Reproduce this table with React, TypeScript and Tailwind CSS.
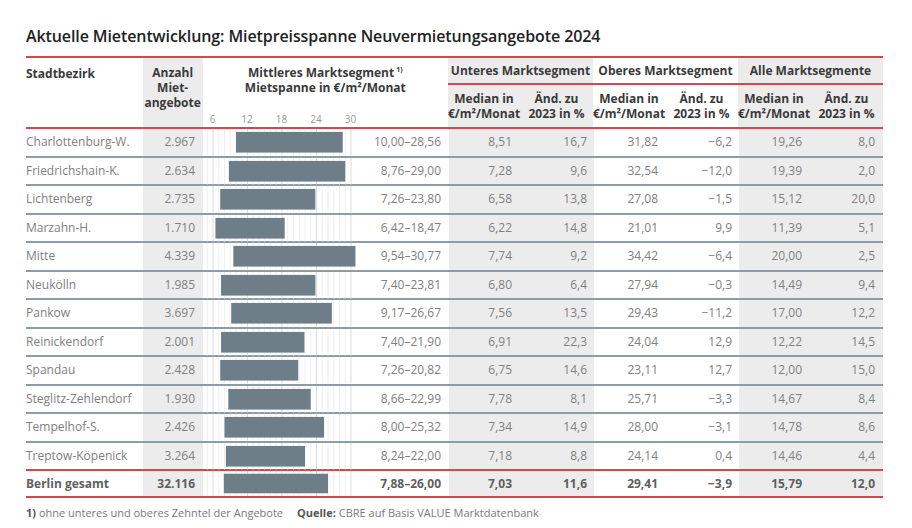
import React from "react";

type Row = {
  name: string;
  n: string;
  lo: number;
  hi: number;
  range: string;
  v: string[];
};

const rows: Row[] = [
  { name: "Charlottenburg-W.", n: "2.967", lo: 10.0, hi: 28.56, range: "10,00–28,56", v: ["8,51", "16,7", "31,82", "−6,2", "19,26", "8,0"] },
  { name: "Friedrichshain-K.", n: "2.634", lo: 8.76, hi: 29.0, range: "8,76–29,00", v: ["7,28", "9,6", "32,54", "−12,0", "19,39", "2,0"] },
  { name: "Lichtenberg", n: "2.735", lo: 7.26, hi: 23.8, range: "7,26–23,80", v: ["6,58", "13,8", "27,08", "−1,5", "15,12", "20,0"] },
  { name: "Marzahn-H.", n: "1.710", lo: 6.42, hi: 18.47, range: "6,42–18,47", v: ["6,22", "14,8", "21,01", "9,9", "11,39", "5,1"] },
  { name: "Mitte", n: "4.339", lo: 9.54, hi: 30.77, range: "9,54–30,77", v: ["7,74", "9,2", "34,42", "−6,4", "20,00", "2,5"] },
  { name: "Neukölln", n: "1.985", lo: 7.4, hi: 23.81, range: "7,40–23,81", v: ["6,80", "6,4", "27,94", "−0,3", "14,49", "9,4"] },
  { name: "Pankow", n: "3.697", lo: 9.17, hi: 26.67, range: "9,17–26,67", v: ["7,56", "13,5", "29,43", "−11,2", "17,00", "12,2"] },
  { name: "Reinickendorf", n: "2.001", lo: 7.4, hi: 21.9, range: "7,40–21,90", v: ["6,91", "22,3", "24,04", "12,9", "12,22", "14,5"] },
  { name: "Spandau", n: "2.428", lo: 7.26, hi: 20.82, range: "7,26–20,82", v: ["6,75", "14,6", "23,11", "12,7", "12,00", "15,0"] },
  { name: "Steglitz-Zehlendorf", n: "1.930", lo: 8.66, hi: 22.99, range: "8,66–22,99", v: ["7,78", "8,1", "25,71", "−3,3", "14,67", "8,4"] },
  { name: "Tempelhof-S.", n: "2.426", lo: 8.0, hi: 25.32, range: "8,00–25,32", v: ["7,34", "14,9", "28,00", "−3,1", "14,78", "8,6"] },
  { name: "Treptow-Köpenick", n: "3.264", lo: 8.24, hi: 22.0, range: "8,24–22,00", v: ["7,18", "8,8", "24,14", "0,4", "14,46", "4,4"] },
];

const total: Row = { name: "Berlin gesamt", n: "32.116", lo: 7.88, hi: 26.0, range: "7,88–26,00", v: ["7,03", "11,6", "29,41", "−3,9", "15,79", "12,0"] };

const X = (v: number) => 10 + (v - 6) * 5.75;

function Bar({ lo, hi }: { lo: number; hi: number }) {
  const lines: number[] = [];
  for (let i = 5; i <= 30; i++) lines.push(i);
  return (
    <svg width="152" height="100%" className="absolute left-0 top-0 h-full overflow-visible">
      {lines.map((i) => (
        <line
          key={i}
          x1={X(i)}
          x2={X(i)}
          y1="0"
          y2="100%"
          stroke={i % 6 === 0 ? "#dcdcdc" : "#efefef"}
          strokeWidth="1"
        />
      ))}
      <rect x={X(lo)} y="11%" width={X(hi) - X(lo)} height="78%" fill="#6e7e88" />
    </svg>
  );
}

function DataRow({ r, bold, last }: { r: Row; bold?: boolean; last?: boolean }) {
  const txt = bold ? "font-bold text-[#5f5f5f]" : "text-[#808080]";
  return (
    <div className={`flex min-h-0 ${bold ? "h-[25px]" : "flex-1"} ${last || bold ? "" : "border-b-2 border-[#8e9ca6]"} text-[12px] ${txt}`}>
      <div className="w-[117px] flex items-center">{r.name}</div>
      <div className="w-[60px] bg-[#ececec] flex items-center justify-end pr-[8px]">{r.n}</div>
      <div className="w-[152px] relative">
        <Bar lo={r.lo} hi={r.hi} />
      </div>
      <div className="w-[94px] flex items-center justify-end pr-[8px]">{r.range}</div>
      <div className="w-[72px] bg-[#ececec] flex items-center justify-end pr-[9px]">{r.v[0]}</div>
      <div className="w-[73px] bg-[#ececec] flex items-center justify-end pr-[7px]">{r.v[1]}</div>
      <div className="w-[72px] flex items-center justify-end pr-[8px]">{r.v[2]}</div>
      <div className="w-[73px] flex items-center justify-end pr-[7px]">{r.v[3]}</div>
      <div className="w-[72px] bg-[#ececec] flex items-center justify-end pr-[9px]">{r.v[4]}</div>
      <div className="w-[72px] bg-[#ececec] flex items-center justify-end pr-[8px]">{r.v[5]}</div>
    </div>
  );
}

function Group({ title, grey }: { title: string; grey?: boolean }) {
  const bg = grey ? "bg-[#ececec]" : "bg-white";
  return (
    <div className="w-[145px] flex flex-col">
      <div className={`h-[25px] ${bg} flex items-center justify-center`}>{title}</div>
      <div className="h-[2px] bg-[#d8454e]" />
      <div className={`flex-1 ${bg} flex`}>
        <div className="w-[72px] flex flex-col items-center justify-center leading-[15px]">
          <span>Median in</span>
          <span>€/m²/Monat</span>
        </div>
        <div className="w-[73px] flex flex-col items-center justify-center leading-[15px]">
          <span>Änd. zu</span>
          <span>2023 in %</span>
        </div>
      </div>
    </div>
  );
}

export default function App() {
  return (
    <div className="w-[912px] h-[528px] bg-white font-['Open_Sans',sans-serif] pl-[26px] pt-[25px]">
      <h1 className="text-[16px] leading-[22px] font-semibold text-[#222] tracking-[-0.1px]">
        Aktuelle Mietentwicklung: Mietpreisspanne Neuvermietungsangebote 2024
      </h1>
      <div className="w-[857px] mt-[9px]">
        <div className="h-[2px] bg-[#d8454e]" />
        <div className="flex h-[69px] text-[12px] font-bold text-[#3a3a3a]">
          <div className="w-[117px] pt-[7px]">Stadtbezirk</div>
          <div className="w-[60px] bg-[#ececec] flex flex-col items-center pt-[7px] leading-[15px]">
            <span>Anzahl</span>
            <span>Miet-</span>
            <span>angebote</span>
          </div>
          <div className="w-[246px] relative">
            <div className="flex flex-col items-center pt-[7px] leading-[15px]">
              <span>
                Mittleres Marktsegment<sup className="text-[7px] ml-[2px] -top-[5px]">1)</sup>
              </span>
              <span>Mietspanne in €/m²/Monat</span>
            </div>
            <div className="absolute left-0 bottom-[1px] w-[152px] h-[14px] text-[10px] font-normal text-[#9a9a9a]">
              {[6, 12, 18, 24, 30].map((t) => (
                <span
                  key={t}
                  className="absolute top-0 -translate-x-1/2 leading-[14px]"
                  style={{ left: X(t) }}
                >
                  {t}
                </span>
              ))}
            </div>
          </div>
          <Group title="Unteres Marktsegment" grey />
          <Group title="Oberes Marktsegment" />
          <Group title="Alle Marktsegmente" grey />
        </div>
        <div className="h-[2px] bg-[#d8454e]" />
        <div className="h-[340px] flex flex-col">
          {rows.map((r, i) => (
            <DataRow key={r.name} r={r} last={i === rows.length - 1} />
          ))}
        </div>
        <div className="h-[2px] bg-[#d8454e]" />
        <DataRow r={total} bold />
        <div className="h-[2px] bg-[#d8454e]" />
      </div>
      <div className="mt-[7px] text-[11px] text-[#7a7a7a]">
        <span className="font-bold text-[#555]">1)</span> ohne unteres und oberes Zehntel der Angebote
        <span className="ml-[14px] font-bold text-[#555]">Quelle:</span> CBRE auf Basis VALUE Marktdatenbank
      </div>
    </div>
  );
}
